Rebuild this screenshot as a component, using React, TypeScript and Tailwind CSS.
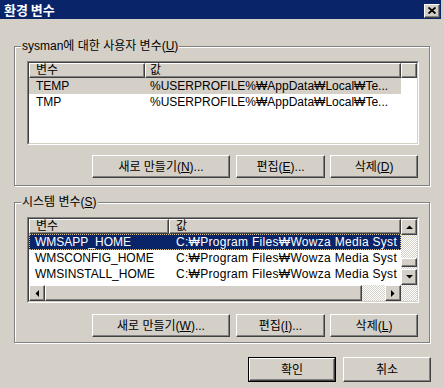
import React from 'react'

// classic 3D edges
const raised =
  'border border-t-white border-l-white border-r-[#404040] border-b-[#404040] shadow-[inset_-1px_-1px_0_#808080]'
const checker =
  'bg-[image:repeating-conic-gradient(#d4d0c8_0_25%,#ffffff_0_50%)] bg-[length:2px_2px]'

function Btn({ children, className = '' }: { children: React.ReactNode; className?: string }) {
  return (
    <div className={`h-[23px] flex items-center justify-center leading-[14px] ${raised} ${className}`}>
      {children}
    </div>
  )
}

function GroupBox({
  title,
  className = '',
  children,
}: {
  title: React.ReactNode
  className?: string
  children: React.ReactNode
}) {
  return (
    <div
      className={`ml-[14px] w-[416px] border border-[#808080] shadow-[inset_1px_1px_0_#fff,1px_1px_0_#fff] flex flex-col ${className}`}
    >
      <div className="-mt-[8px] ml-[6px] self-start bg-[#d4d0c8] px-[1px] h-[14px] leading-[14px] whitespace-nowrap">
        {title}
      </div>
      {children}
    </div>
  )
}

function Arrow({ dir }: { dir: 'up' | 'down' | 'left' | 'right' }) {
  const pts = {
    up: '0,4 7,4 3.5,0.5',
    down: '0,0 7,0 3.5,3.5',
    left: '4,0 4,7 0.5,3.5',
    right: '0,0 0,7 3.5,3.5',
  }[dir]
  const vertical = dir === 'up' || dir === 'down'
  return (
    <div className={`w-[16px] h-[16px] shrink-0 bg-[#d4d0c8] flex items-center justify-center ${raised}`}>
      <svg width={vertical ? 7 : 4} height={vertical ? 4 : 7} viewBox={vertical ? '0 0 7 4' : '0 0 4 7'}>
        <polygon points={pts} fill="#000" />
      </svg>
    </div>
  )
}

function ButtonRow({ items, className = '' }: { items: React.ReactNode[]; className?: string }) {
  return (
    <div className={`flex justify-end pr-[11px] ${className}`}>
      <Btn className="w-[138px]">{items[0]}</Btn>
      <Btn className="w-[89px] ml-[6px]">{items[1]}</Btn>
      <Btn className="w-[88px] ml-[5px]">{items[2]}</Btn>
    </div>
  )
}

const userVars = [
  ['TEMP', '%USERPROFILE%₩AppData₩Local₩Te...'],
  ['TMP', '%USERPROFILE%₩AppData₩Local₩Te...'],
]

const sysVars = [
  ['WMSAPP_HOME', 'C:₩Program Files₩Wowza Media Syst'],
  ['WMSCONFIG_HOME', 'C:₩Program Files₩Wowza Media Syst'],
  ['WMSINSTALL_HOME', 'C:₩Program Files₩Wowza Media Syst'],
  ['WMSMAIN_HOME', 'C:₩Program Files₩Wowza Media Syst'],
]

export default function App() {
  return (
    <div className="w-[444px] h-[388px] bg-[#d4d0c8] flex flex-col overflow-hidden text-[12px] text-black font-['Liberation_Sans','Noto_Sans_CJK_KR',sans-serif]">
      {/* title bar */}
      <div className="h-[19px] w-[441px] shrink-0 bg-[#0a246a] flex items-center justify-between pl-[4px] pr-[1px]">
        <span className="text-white font-bold text-[13px] leading-[15px] font-['Noto_Sans_CJK_KR',sans-serif]">
          환경 변수
        </span>
        <div className={`w-[16px] h-[14px] mt-[2px] bg-[#d4d0c8] flex items-center justify-center ${raised}`}>
          <svg width="8" height="7" viewBox="0 0 8 7">
            <path d="M0.5 0.5L7.5 6.5M7.5 0.5L0.5 6.5" stroke="#000" strokeWidth="1.8" />
          </svg>
        </div>
      </div>

      {/* user variables */}
      <GroupBox
        className="mt-[27px] h-[140px]"
        title={
          <>
            sysman에 대한 사용자 변수(<u>U</u>)
          </>
        }
      >
        <div className="ml-[12px] mt-[8px] w-[392px] h-[84px] border border-t-[#808080] border-l-[#808080] border-r-white border-b-white">
          <div className="h-full border border-t-[#404040] border-l-[#404040] border-r-[#d4d0c8] border-b-[#d4d0c8] bg-white flex flex-col overflow-hidden">
            <div className="h-[15px] shrink-0 flex leading-[13px] bg-[#d4d0c8]">
              <div className={`w-[116px] pl-[6px] ${raised}`}>변수</div>
              <div className={`w-[256px] pl-[4px] ${raised}`}>값</div>
              <div className={`flex-1 ${raised}`} />
            </div>
            {userVars.map(([k, v], i) => (
              <div
                key={k}
                className={`h-[16px] w-[372px] flex leading-[16px] whitespace-nowrap ${i === 0 ? 'bg-[#d4d0c8]' : ''}`}
              >
                <div className="w-[116px] pl-[7px]">{k}</div>
                <div className="w-[256px] pl-[5px]">{v}</div>
              </div>
            ))}
          </div>
        </div>
        <ButtonRow
          className="mt-[10px]"
          items={[
            <>
              새로 만들기(<u>N</u>)...
            </>,
            <>
              편집(<u>E</u>)...
            </>,
            <>
              삭제(<u>D</u>)
            </>,
          ]}
        />
      </GroupBox>

      {/* system variables */}
      <GroupBox
        className="mt-[16px] h-[141px]"
        title={
          <>
            시스템 변수(<u>S</u>)
          </>
        }
      >
        <div className="ml-[12px] mt-[8px] w-[392px] h-[86px] border border-t-[#808080] border-l-[#808080] border-r-white border-b-white">
          <div className="h-full border border-t-[#404040] border-l-[#404040] border-r-[#d4d0c8] border-b-[#d4d0c8] bg-white flex flex-col overflow-hidden">
            <div className="h-[66px] flex shrink-0">
              <div className="w-[372px] flex flex-col overflow-hidden">
                <div className="h-[15px] shrink-0 flex leading-[13px] bg-[#d4d0c8]">
                  <div className={`w-[140px] pl-[6px] ${raised}`}>변수</div>
                  <div className={`flex-1 pl-[6px] ${raised}`}>값</div>
                </div>
                {sysVars.map(([k, v], i) => (
                  <div
                    key={k}
                    className={`h-[16px] shrink-0 flex leading-[16px] whitespace-nowrap ${
                      i === 0
                        ? 'bg-[#0a246a] text-white outline outline-1 outline-dotted outline-[#d8c890] -outline-offset-1'
                        : ''
                    }`}
                  >
                    <div className="w-[140px] pl-[6px] overflow-hidden">{k}</div>
                    <div className="w-[232px] pl-[7px] tracking-[0.3px] overflow-hidden">{v}</div>
                  </div>
                ))}
              </div>
              {/* vertical scrollbar */}
              <div className="w-[16px] flex flex-col">
                <Arrow dir="up" />
                <div className={`h-[23px] ${checker}`} />
                <div className={`h-[9px] bg-[#d4d0c8] ${raised}`} />
                <div className={`h-[2px] ${checker}`} />
                <Arrow dir="down" />
              </div>
            </div>
            {/* horizontal scrollbar */}
            <div className="h-[16px] flex shrink-0">
              <Arrow dir="left" />
              <div className={`w-[317px] bg-[#d4d0c8] ${raised}`} />
              <div className={`w-[23px] ${checker}`} />
              <Arrow dir="right" />
              <div className={`w-[16px] ${checker}`} />
            </div>
          </div>
        </div>
        <ButtonRow
          className="mt-[11px]"
          items={[
            <>
              새로 만들기(<u>W</u>)...
            </>,
            <>
              편집(<u>I</u>)...
            </>,
            <>
              삭제(<u>L</u>)
            </>,
          ]}
        />
      </GroupBox>

      {/* dialog buttons */}
      <div className="mt-[14px] flex justify-end pr-[13px]">
        <div className="w-[88px] h-[25px] border border-black">
          <Btn className="w-full h-full">확인</Btn>
        </div>
        <Btn className="w-[88px] h-[25px] ml-[7px]">취소</Btn>
      </div>
    </div>
  )
}
